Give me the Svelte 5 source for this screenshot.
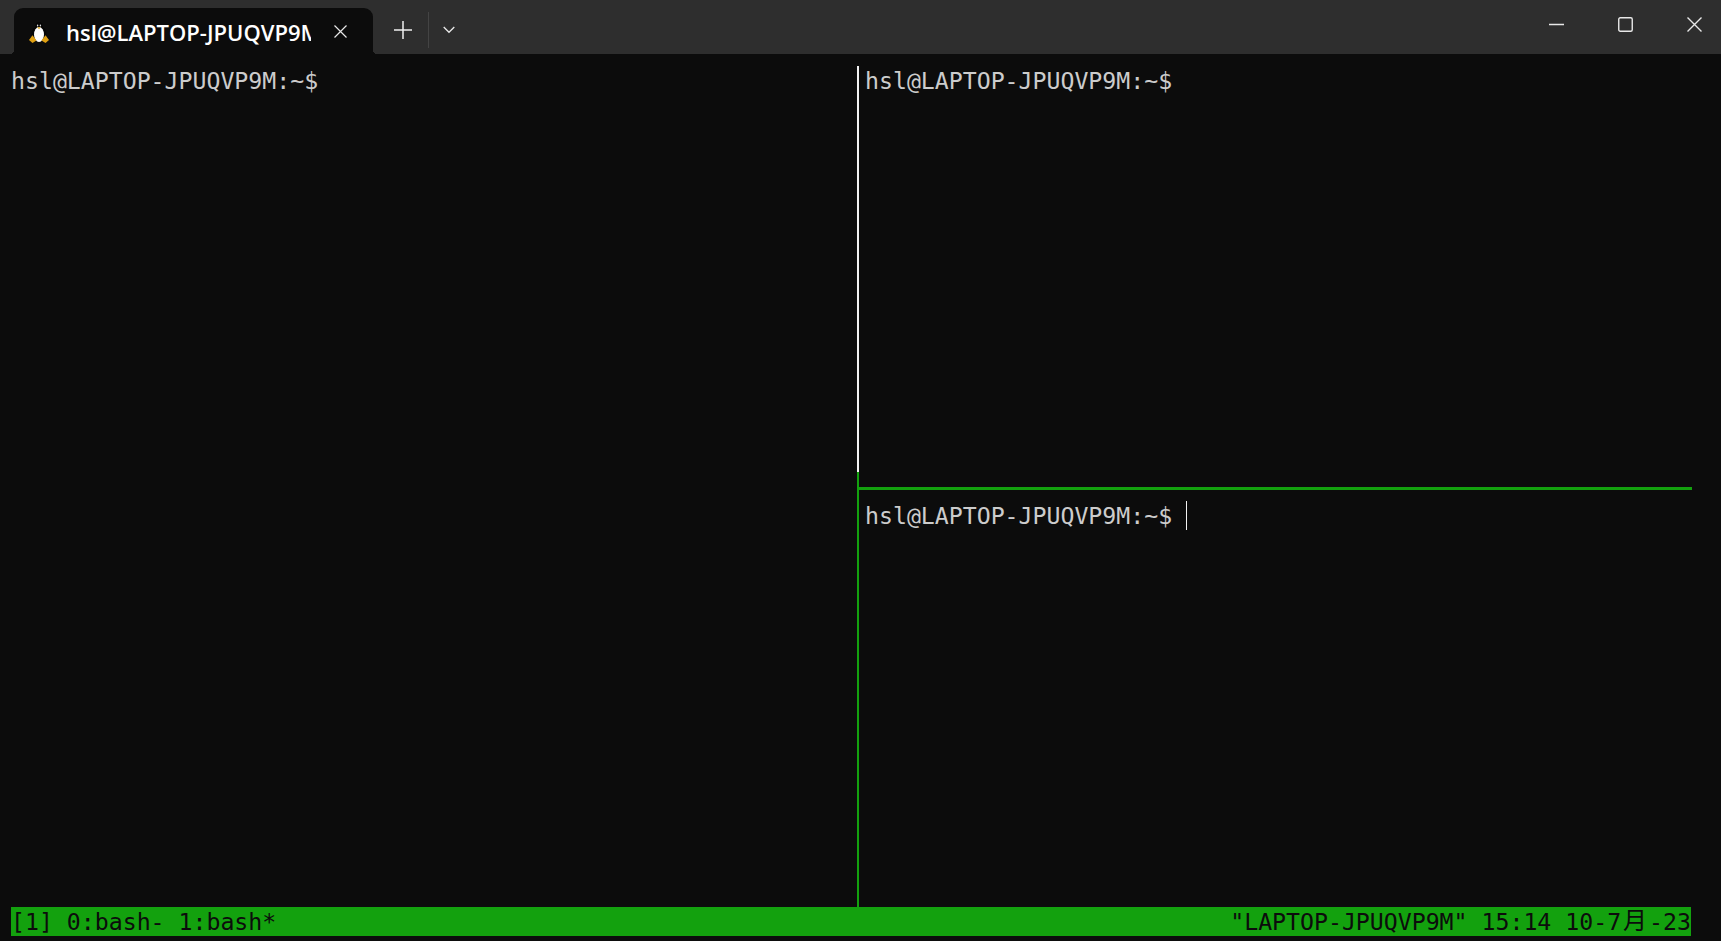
<script>
	let prompt = 'hsl@LAPTOP-JPUQVP9M:~$';
</script>

<div class="window">
	<header class="titlebar">
		<div class="tab">
			<svg class="tux" width="20" height="21" viewBox="0 0 20 21">
				<ellipse cx="10" cy="4.5" rx="3.6" ry="4.5" fill="#060606" />
				<ellipse cx="10" cy="12" rx="7.5" ry="8" fill="#060606" />
				<ellipse cx="10" cy="12.5" rx="5" ry="7.5" fill="#fff" />
				<ellipse cx="8.6" cy="3.6" rx=".7" ry="1" fill="#ddd" />
				<ellipse cx="11.4" cy="3.6" rx=".7" ry="1" fill="#ddd" />
				<path d="M8.3 5.2h3.4L10 7.2z" fill="#d9a016" />
				<path d="M0 18 3.5 13.2 7.5 18.5 3.5 21z" fill="#dfa012" />
				<path d="M20 18 16.5 13.2 12.5 18.5 16.5 21z" fill="#dfa012" />
			</svg>
			<span class="tab-title">hsl@LAPTOP-JPUQVP9M</span>
			<svg class="tab-close" width="13" height="13" viewBox="0 0 13 13">
				<path d="M.5.5l12 12M12.5.5l-12 12" stroke="#e8e8e8" stroke-width="1.2" />
			</svg>
		</div>
		<button class="icon-btn plus" aria-label="New tab">
			<svg width="18" height="18" viewBox="0 0 18 18">
				<path d="M9 0v18M0 9h18" stroke="#f0f0f0" stroke-width="1.5" />
			</svg>
		</button>
		<span class="divider"></span>
		<button class="icon-btn chevron" aria-label="More">
			<svg width="12" height="8" viewBox="0 0 12 8">
				<path d="M.7 1 6 6.3 11.3 1" fill="none" stroke="#e8e8e8" stroke-width="1.3" />
			</svg>
		</button>
		<div class="controls">
			<svg width="15" height="3" viewBox="0 0 15 3"><path d="M0 1.5h15" stroke="#e8e8e8" stroke-width="1.5" /></svg>
			<svg width="15" height="15" viewBox="0 0 15 15"><rect x=".75" y=".75" width="13.5" height="13.5" rx="1.5" fill="none" stroke="#e8e8e8" stroke-width="1.4" /></svg>
			<svg width="15" height="15" viewBox="0 0 15 15"><path d="M.5.5l14 14M14.5.5l-14 14" stroke="#e8e8e8" stroke-width="1.4" /></svg>
		</div>
	</header>

	<main class="terminal">
		<div class="panes">
			<section class="pane">{prompt}</section>
			<div class="right">
				<section class="pane top">{prompt}</section>
				<section class="pane bottom">
					<div class="rule"></div>
					<div class="line">{prompt}<span class="cursor"></span></div>
				</section>
			</div>
		</div>
		<footer class="status">
			<span>[1] 0:bash- 1:bash*</span>
			<span>"LAPTOP-JPUQVP9M" 15:14 10-7<span class="wide">月</span>-23</span>
		</footer>
	</main>
</div>

<style>
	:global(body) {
		margin: 0;
		background: #0c0c0c;
	}
	.window {
		width: 1721px;
		height: 941px;
		display: flex;
		flex-direction: column;
		overflow: hidden;
	}
	.titlebar {
		height: 54px;
		flex: none;
		display: flex;
		align-items: center;
		background: #2e2e2e;
		padding-left: 14px;
		box-sizing: border-box;
		font-family: 'Open Sans', 'Noto Sans', sans-serif;
	}
	.tab {
		position: relative;
		width: 359px;
		height: 46px;
		flex: none;
		align-self: flex-end;
		box-sizing: border-box;
		background: #0c0c0c;
		border-radius: 9px 9px 0 0;
		display: flex;
		align-items: center;
		padding-left: 15px;
		color: #fff;
	}
	.tab::before,
	.tab::after {
		content: '';
		position: absolute;
		bottom: 0;
		width: 4px;
		height: 4px;
	}
	.tab::before {
		left: -4px;
		background: radial-gradient(circle at 0 0, transparent 4px, #0c0c0c 4px);
	}
	.tab::after {
		right: -4px;
		background: radial-gradient(circle at 100% 0, transparent 4px, #0c0c0c 4px);
	}
	.tux {
		flex: none;
		margin-top: 3px;
	}
	.tab-title {
		width: 245px;
		flex: none;
		margin-left: 17px;
		padding-top: 2px;
		overflow: hidden;
		white-space: nowrap;
		font-size: 22px;
		font-weight: 600;
	}
	.tab-close {
		flex: none;
		margin-left: 23px;
	}
	.icon-btn {
		border: 0;
		padding: 0;
		margin-top: 6px;
		background: none;
		display: flex;
		align-items: center;
		justify-content: center;
	}
	.plus {
		margin-left: 21px;
	}
	.divider {
		width: 1px;
		height: 36px;
		background: #444;
		margin: 6px 0 0 16px;
	}
	.chevron {
		margin-left: 14px;
	}
	.controls {
		margin-left: auto;
		padding-right: 19px;
		display: flex;
		align-items: center;
		gap: 54px;
		height: 48px;
		align-self: flex-start;
	}
	.terminal {
		flex: 1;
		display: flex;
		flex-direction: column;
		padding: 12px 30px 5px 11px;
		background: #0c0c0c;
		color: #cccccc;
		font-family: 'DejaVu Sans Mono', 'Noto Sans CJK SC', monospace;
		font-size: 23.2px;
		line-height: 29px;
		white-space: nowrap;
		min-height: 0;
	}
	.panes {
		flex: 1;
		display: grid;
		grid-template-columns: 846px 1fr;
		min-height: 0;
	}
	.right {
		display: flex;
		flex-direction: column;
	}
	.top {
		height: 406px;
		box-sizing: border-box;
		border-left: 2px solid #f2f2f2;
		padding-left: 6px;
	}
	.bottom {
		flex: 1;
		border-left: 2px solid #13a10e;
	}
	.rule {
		height: 3px;
		margin: 15px -1px 11px 0;
		background: #13a10e;
	}
	.line {
		padding-left: 6px;
	}
	.cursor {
		display: inline-block;
		width: 1px;
		height: 29px;
		background: #f2f2f2;
		margin-left: 14px;
		vertical-align: top;
	}
	.status {
		height: 29px;
		flex: none;
		display: flex;
		justify-content: space-between;
		background: #13a10e;
		color: #0c0c0c;
	}
	.wide {
		display: inline-block;
		width: 28px;
		height: 29px;
		text-align: center;
		font-size: 24px;
		vertical-align: top;
	}
</style>
